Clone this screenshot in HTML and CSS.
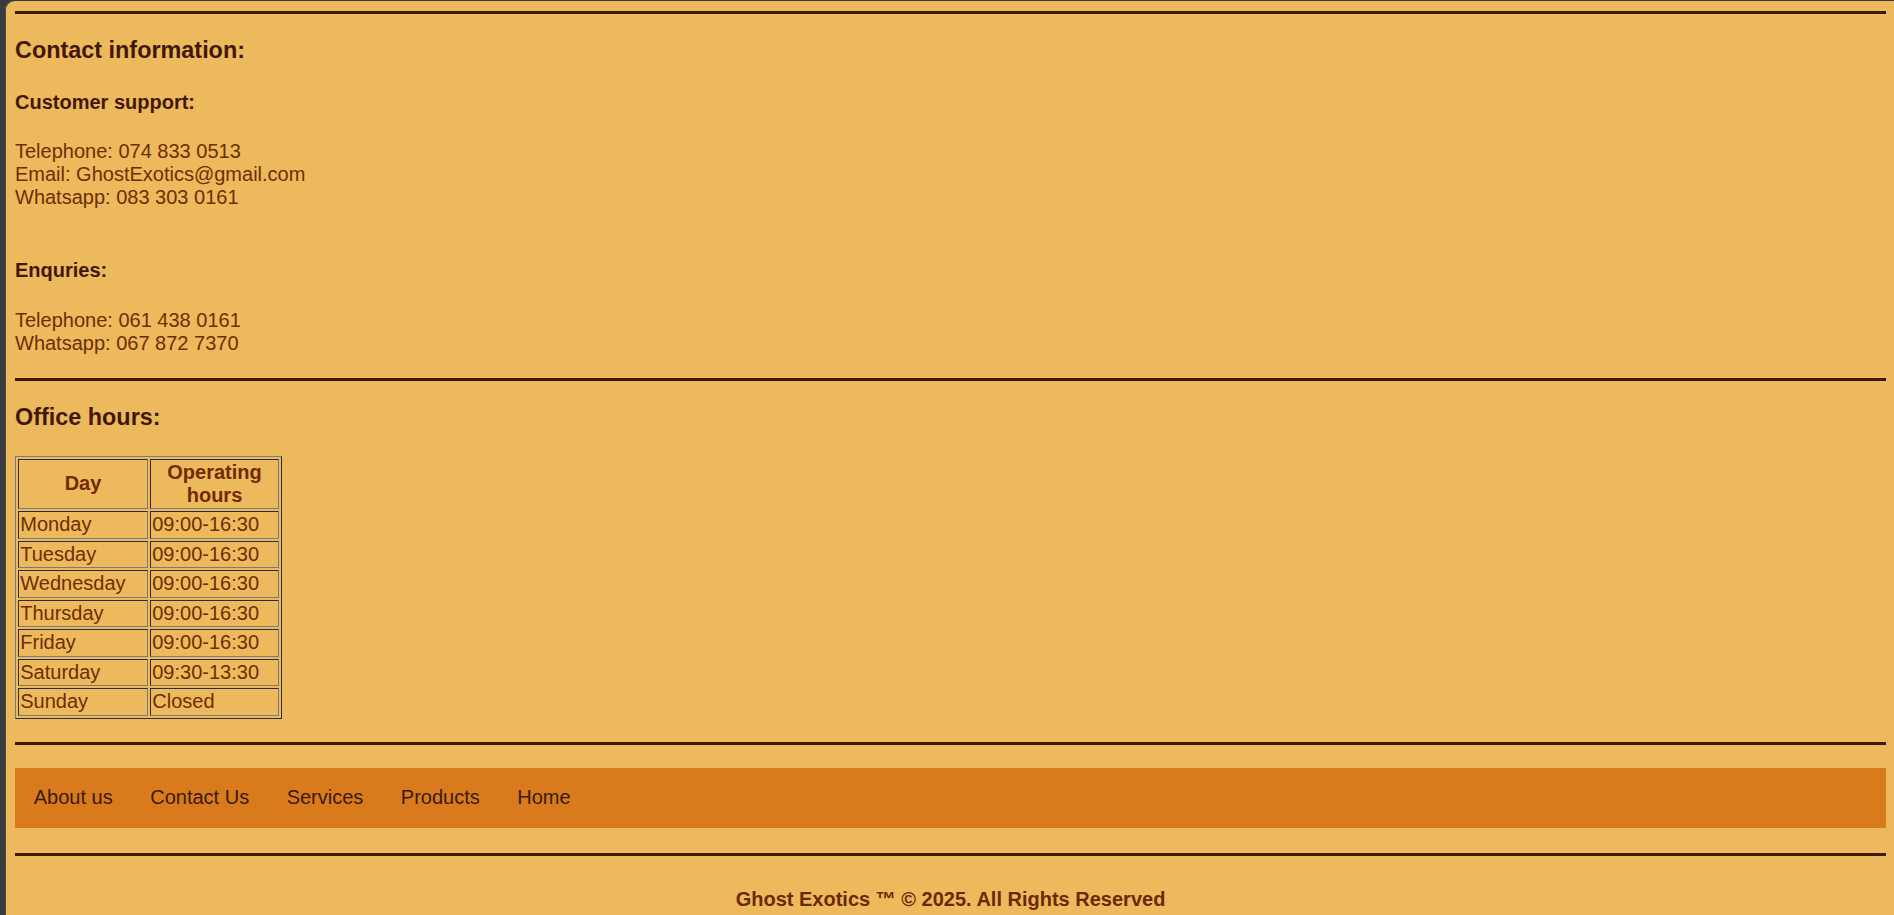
FILE: index.html
```html
<!DOCTYPE html>
<html lang="en">
<head>
<meta charset="utf-8">
<title>Ghost Exotics - Contact Us</title>
<link rel="stylesheet" href="styles.css">
</head>
<body>
<div class="page">
  <hr class="rule rule-top">
  <h3 class="title title-contact">Contact information:</h3>
  <h4 class="sub sub-support">Customer support:</h4>
  <p class="info info-support">Telephone: 074 833 0513<br>Email: GhostExotics@gmail.com<br>Whatsapp: 083 303 0161<br><br></p>
  <h4 class="sub sub-enq">Enquries:</h4>
  <p class="info info-enq">Telephone: 061 438 0161<br>Whatsapp: 067 872 7370</p>
  <hr class="rule rule-mid">
  <h3 class="title title-hours">Office hours:</h3>
  <table class="hours">
    <thead>
      <tr><th class="col-day">Day</th><th class="col-time">Operating hours</th></tr>
    </thead>
    <tbody>
      <tr><td>Monday</td><td>09:00-16:30</td></tr>
      <tr><td>Tuesday</td><td>09:00-16:30</td></tr>
      <tr><td>Wednesday</td><td>09:00-16:30</td></tr>
      <tr><td>Thursday</td><td>09:00-16:30</td></tr>
      <tr><td>Friday</td><td>09:00-16:30</td></tr>
      <tr><td>Saturday</td><td>09:30-13:30</td></tr>
      <tr><td>Sunday</td><td>Closed</td></tr>
    </tbody>
  </table>
  <hr class="rule rule-nav">
  <nav class="nav">
    <a href="#" class="nav-link">About us</a>
    <a href="#" class="nav-link">Contact Us</a>
    <a href="#" class="nav-link">Services</a>
    <a href="#" class="nav-link">Products</a>
    <a href="#" class="nav-link">Home</a>
  </nav>
  <hr class="rule rule-foot">
  <p class="footer">Ghost Exotics &trade; &copy; 2025. All Rights Reserved</p>
</div>
</body>
</html>
```
FILE: styles.css
```css
html, body {
  margin: 0;
  padding: 0;
  height: 100%;
  overflow: hidden;
}
body {
  background: #3a3a3a;
  font-family: "Liberation Sans", Arial, sans-serif;
  font-size: 20px;
}
.page {
  margin: 1px 0 0 5px;
  border-top-left-radius: 9px;
  background: #edb95d;
  padding: 0 8px 0 10px;
  min-height: calc(100vh - 1px);
  box-sizing: border-box;
  display: flex;
  flex-direction: column;
  box-shadow: inset 1px 0 0 #4a4a4a;
}
.rule {
  border: 0;
  height: 3px;
  background: #3d1a08;
  margin: 0;
  width: 100%;
  flex: none;
}
.rule-top { margin-top: 10px; }
.rule-mid { margin-top: 23px; }
.rule-nav { margin-top: 23px; }
.rule-foot { margin-top: 25px; }

.title {
  font-size: 23.4px;
  font-weight: bold;
  color: #431705;
  margin: 23px 0 0;
  line-height: 27px;
}
.sub {
  font-size: 20px;
  font-weight: bold;
  color: #431705;
  margin: 27px 0 0;
  line-height: 23px;
}
.sub-enq { margin-top: 26.5px; }
.info {
  margin: 26px 0 0;
  line-height: 23px;
  color: #6d2e02;
}
.info-enq { margin-top: 27.5px; }

.hours {
  margin-top: 24.5px;
  width: 267px;
  table-layout: fixed;
  border-collapse: separate;
  border-spacing: 2px;
  border: 1px solid;
  border-color: #7a7a7a #2c2c2c #2c2c2c #7a7a7a;
  font-size: 20px;
}
.hours th, .hours td {
  box-sizing: border-box;
  border: 1px solid;
  border-color: #2c2c3a #7a7a7a #7a7a7a #2c2c3a;
  padding: 1.25px;
  line-height: 23px;
  color: #6d2e02;
  text-align: left;
  vertical-align: middle;
}
.hours th {
  font-weight: bold;
  text-align: center;
  color: #722a00;
}
.col-day { width: 130px; }
.col-time { width: 129px; }

.nav {
  margin-top: 23px;
  height: 60px;
  flex: none;
  background: #d97b1c;
  display: flex;
  align-items: center;
}
.nav-link {
  color: #3a1a08;
  text-decoration: none;
  font-size: 20px;
  line-height: 23px;
  padding: 0 18.75px;
}

.footer {
  margin: 32px 0 0;
  text-align: center;
  font-weight: bold;
  line-height: 23px;
  color: #6a2902;
}
```
